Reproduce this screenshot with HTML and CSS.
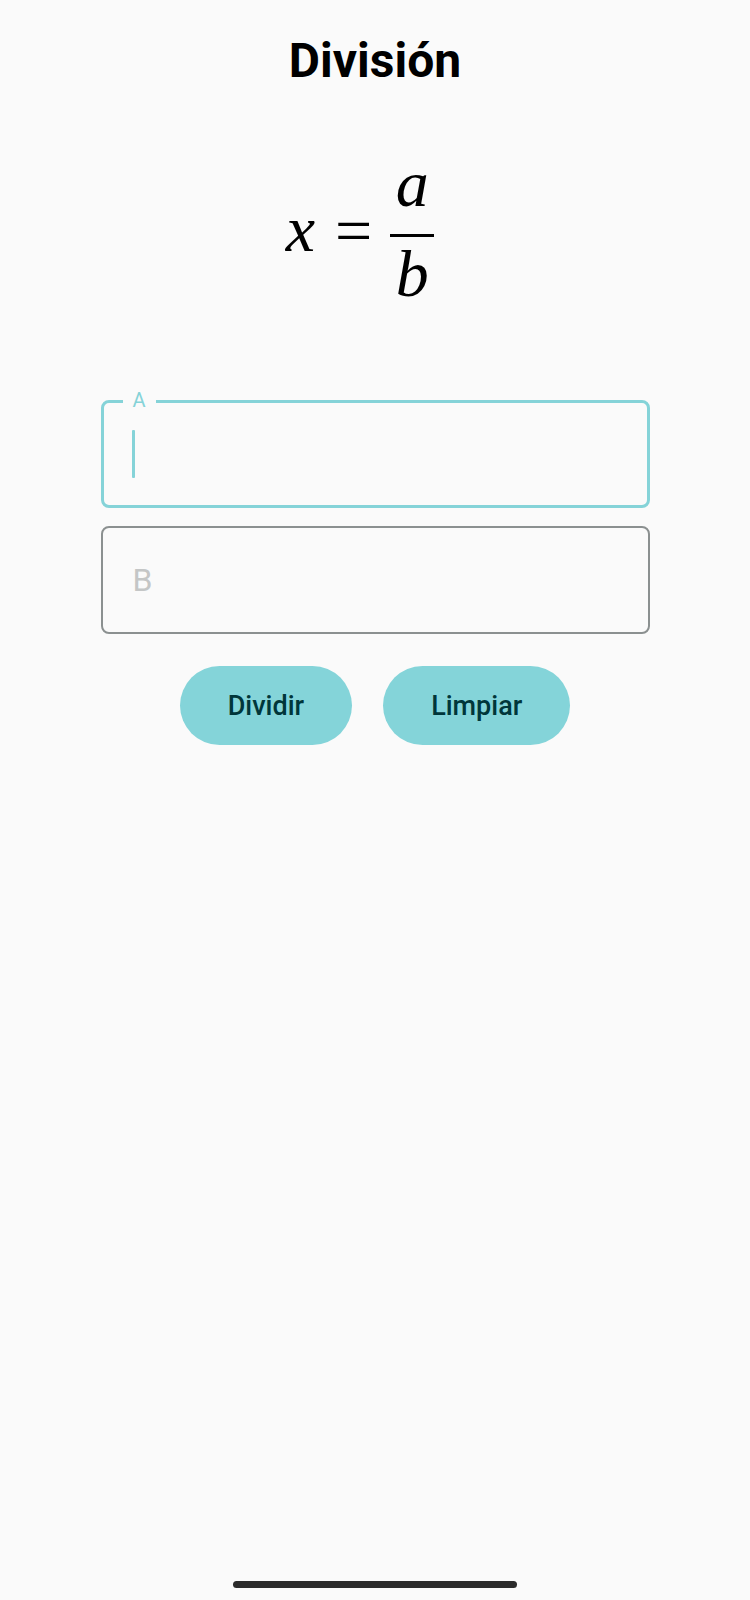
FILE: index.html
```html
<!DOCTYPE html>
<html lang="es">
<head>
<meta charset="utf-8">
<title>División</title>
<link rel="stylesheet" href="styles.css">
</head>
<body>
<div class="screen">
  <h1 class="title">División</h1>
  <div class="formula">
    <span class="var x">x</span>
    <span class="eq">=</span>
    <span class="frac">
      <span class="num">a</span>
      <span class="bar"></span>
      <span class="den">b</span>
    </span>
  </div>
  <div class="fields">
    <div class="field focused">
      <span class="label">A</span>
      <span class="cursor"></span>
    </div>
    <div class="field">
      <span class="placeholder">B</span>
    </div>
  </div>
  <div class="actions">
    <button class="btn">Dividir</button>
    <button class="btn">Limpiar</button>
  </div>
  <div class="home-indicator"></div>
</div>
</body>
</html>
```

FILE: styles.css
```css
html, body {
  margin: 0;
  padding: 0;
  background: #fafafa;
}

.screen {
  min-height: 1600px;
  display: flex;
  flex-direction: column;
  align-items: center;
  font-family: Roboto, "Liberation Sans", sans-serif;
}

.title {
  margin: 33px 0 0;
  font-size: 48px;
  line-height: 56px;
  font-weight: 700;
  color: #000;
}

.formula {
  margin-top: 62px;
  display: flex;
  align-items: center;
  font-family: "Liberation Serif", "DejaVu Serif", serif;
  font-size: 66px;
  line-height: 66px;
  color: #000;
  padding-right: 36px;
}

.var, .num, .den {
  font-style: italic;
}

.x {
  margin-left: 6px;
}

.eq {
  margin: 3px 18px 0 20px;
}

.frac {
  display: flex;
  flex-direction: column;
  align-items: center;
  width: 44px;
}

.num {
  margin-bottom: 17px;
}

.bar {
  width: 44px;
  height: 3px;
  background: #000;
}

.den {
  margin-top: 4px;
}

.fields {
  margin-top: 93px;
  width: 549px;
  display: flex;
  flex-direction: column;
  gap: 18px;
}

.field {
  position: relative;
  box-sizing: border-box;
  height: 108px;
  border: 2px solid #8b9090;
  border-radius: 8px;
  display: flex;
  align-items: center;
  padding-left: 30px;
}

.field.focused {
  border: 3px solid #85d3d8;
  padding-left: 28px;
}

.label {
  position: absolute;
  top: -14px;
  left: 19px;
  padding: 0 10px;
  background: #fafafa;
  color: #85d3d8;
  font-size: 20px;
  line-height: 22px;
}

.cursor {
  width: 3px;
  height: 48px;
  background: #85d3d8;
  border-radius: 1px;
}

.placeholder {
  font-size: 32px;
  color: #c4c6c6;
}

.actions {
  margin-top: 32px;
  display: flex;
  gap: 31px;
}

.btn {
  height: 79px;
  padding: 0 48px;
  border: none;
  border-radius: 40px;
  background: #84d4d9;
  color: #00363a;
  font-family: Roboto, "Liberation Sans", sans-serif;
  font-size: 27px;
  font-weight: 500;
}

.home-indicator {
  margin-top: auto;
  margin-bottom: 12px;
  width: 284px;
  height: 7px;
  border-radius: 4px;
  background: #2b2b2b;
}
```
